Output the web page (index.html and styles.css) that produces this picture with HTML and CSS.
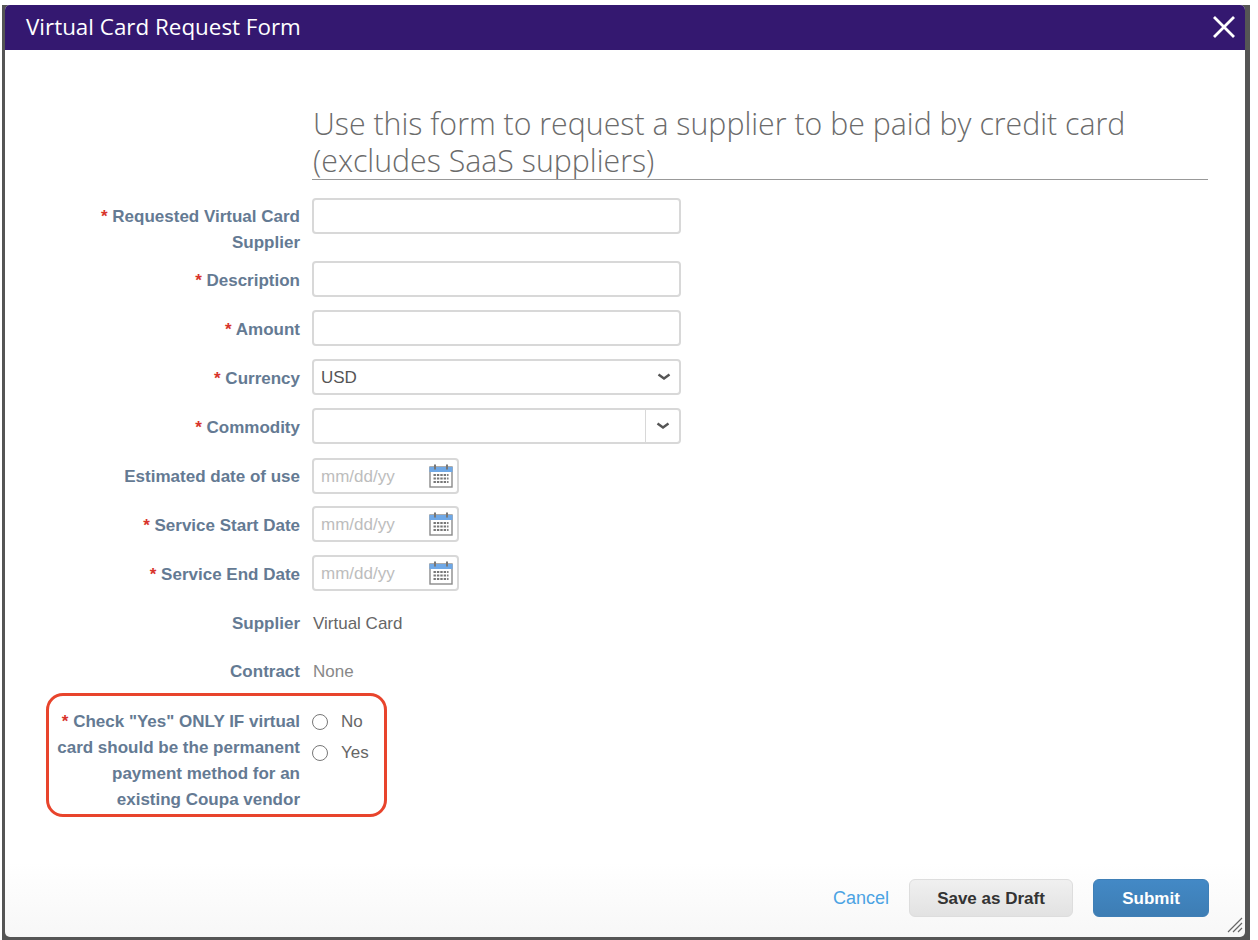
FILE: index.html
```html
<!DOCTYPE html>
<html lang="en">
<head>
  <meta charset="UTF-8" />
  <title>Virtual Card Request Form</title>
  <link rel="stylesheet" href="styles.css">
</head>
<body>
  <svg width="0" height="0" class="defs">
    <symbol id="cal" viewBox="0 0 24 24">
      <rect x="1" y="3" width="22" height="20" fill="#fff" stroke="#8a8a8a" stroke-width="1.4"/>
      <rect x="0.5" y="3" width="23" height="5" fill="#6fa8e6"/>
      <rect x="5" y="0.5" width="2" height="5" fill="#777"/>
      <rect x="17" y="0.5" width="2" height="5" fill="#777"/>
      <path d="M4.5 11h15M4.5 14.5h15M4.5 18h15" stroke="#777" stroke-width="2" stroke-dasharray="2.4 1"/>
    </symbol>
    <symbol id="chev" viewBox="0 0 14 8">
      <path d="M1.5 1.5 L7 5.5 L12.5 1.5" fill="none" stroke="#555" stroke-width="2.4"/>
    </symbol>
  </svg>

  <div class="backdrop">
    <div class="dialog">
      <div class="dialog-head">
        <span class="dialog-title">Virtual Card Request Form</span>
        <svg class="close" width="24" height="24" viewBox="0 0 24 24"><path d="M2 2 L22 22 M22 2 L2 22" stroke="#fff" stroke-width="2.8"/></svg>
      </div>

      <div class="dialog-body">
        <h2 class="intro">Use this form to request a supplier to be paid by credit card (excludes SaaS suppliers)</h2>

        <div class="row row-1">
          <label class="lbl"><span class="req">*</span> Requested Virtual Card Supplier</label>
          <div class="input wide"></div>
        </div>
        <div class="row row-2">
          <label class="lbl"><span class="req">*</span> Description</label>
          <div class="input wide"></div>
        </div>
        <div class="row row-3">
          <label class="lbl"><span class="req">*</span> Amount</label>
          <div class="input wide"></div>
        </div>
        <div class="row row-4">
          <label class="lbl"><span class="req">*</span> Currency</label>
          <div class="input wide select">USD<svg class="chev" width="14" height="8"><use href="#chev"/></svg></div>
        </div>
        <div class="row row-5">
          <label class="lbl"><span class="req">*</span> Commodity</label>
          <div class="input wide combo"><span class="combo-btn"><svg class="chev" width="14" height="8"><use href="#chev"/></svg></span></div>
        </div>
        <div class="row row-6">
          <label class="lbl">Estimated date of use</label>
          <div class="input date">mm/dd/yy<svg class="cal" width="24" height="24"><use href="#cal"/></svg></div>
        </div>
        <div class="row row-7">
          <label class="lbl"><span class="req">*</span> Service Start Date</label>
          <div class="input date">mm/dd/yy<svg class="cal" width="24" height="24"><use href="#cal"/></svg></div>
        </div>
        <div class="row row-8">
          <label class="lbl"><span class="req">*</span> Service End Date</label>
          <div class="input date">mm/dd/yy<svg class="cal" width="24" height="24"><use href="#cal"/></svg></div>
        </div>
        <div class="row row-9">
          <label class="lbl">Supplier</label>
          <div class="val">Virtual Card</div>
        </div>
        <div class="row row-10">
          <label class="lbl">Contract</label>
          <div class="val muted">None</div>
        </div>
        <div class="row row-11">
          <label class="lbl"><span class="req">*</span> Check "Yes" ONLY IF virtual card should be the permanent payment method for an existing Coupa vendor</label>
          <div class="radios">
            <div class="radio-line"><span class="radio"></span>No</div>
            <div class="radio-line"><span class="radio"></span>Yes</div>
          </div>
        </div>
      </div>

      <div class="dialog-foot">
        <a class="cancel">Cancel</a>
        <button class="btn draft">Save as Draft</button>
        <button class="btn submit">Submit</button>
      </div>

      <div class="callout"></div>
      <svg class="grip" width="18" height="18" viewBox="0 0 18 18"><path d="M3 17 L17 3 M8 17 L17 8 M13 17 L17 13" stroke="#666" stroke-width="1.2"/></svg>
    </div>
  </div>
</body>
</html>
```

FILE: styles.css
```css
html, body {
  margin: 0;
  height: 100%;
}
body {
  background: #fff;
  padding: 5px 8px 0 2px;
  box-sizing: border-box;
  font-family: "Liberation Sans", Arial, sans-serif;
  overflow: hidden;
}
.defs {
  position: absolute;
}
.backdrop {
  height: 935px;
  box-sizing: border-box;
  background: #555;
  padding: 0 5px 3px 3px;
}
.dialog {
  position: relative;
  height: 932px;
  background: linear-gradient(180deg, #fff 0, #fff 92%, #f7f7f7 100%);
  border-radius: 5px;
  display: flex;
  flex-direction: column;
}
.dialog-head {
  height: 45px;
  flex: none;
  box-sizing: border-box;
  background: #341870;
  border-radius: 5px 5px 0 0;
  display: flex;
  align-items: center;
  justify-content: space-between;
  padding: 0 9px 2px 21px;
}
.dialog-title {
  font-family: "Open Sans", sans-serif;
  font-size: 22.4px;
  color: #fff;
}
.dialog-body {
  flex: 1;
  padding: 55px 37px 0 0;
}
.intro {
  margin: 0 0 18px 307px;
  padding-left: 1px;
  border-bottom: 1px solid #999;
  font-family: "Open Sans", sans-serif;
  font-weight: 300;
  font-size: 30.3px;
  line-height: 37px;
  color: #6b6b6b;
}
.row {
  display: flex;
  align-items: flex-start;
  gap: 12px;
}
.row-1 { margin-bottom: 5px; }
.row-2, .row-3, .row-4 { margin-bottom: 13px; }
.row-5 { margin-bottom: 14px; }
.row-6 { margin-bottom: 12px; }
.row-7 { margin-bottom: 13px; }
.row-8 { margin-bottom: 20px; }
.row-9 { margin-bottom: 22px; }
.row-10 { margin-bottom: 24px; }
.lbl {
  width: 295px;
  flex: none;
  box-sizing: border-box;
  padding: 7px 0 0 40px;
  text-align: right;
  font-size: 17px;
  font-weight: bold;
  line-height: 26px;
  color: #647a93;
}
.row-1 .lbl, .row-6 .lbl {
  padding-top: 6px;
}
.row-9 .lbl, .row-10 .lbl, .row-11 .lbl {
  padding-top: 0;
}
.req {
  color: #d8342c;
}
.input {
  height: 36px;
  box-sizing: border-box;
  border: 2px solid #d8d8d8;
  border-radius: 4px;
  background: #fff;
  display: flex;
  align-items: center;
  font-size: 17px;
  padding: 2px 0 0 7px;
  color: #555;
}
.wide {
  width: 369px;
}
.select {
  justify-content: space-between;
  padding-right: 8px;
}
.select .chev {
  margin-top: -2px;
}
.combo {
  justify-content: flex-end;
  padding: 0;
}
.combo-btn {
  width: 34px;
  height: 100%;
  box-sizing: border-box;
  border-left: 1px solid #d8d8d8;
  display: flex;
  align-items: center;
  justify-content: center;
}
.date {
  width: 147px;
  justify-content: space-between;
  padding-right: 4px;
  color: #bdbdbd;
}
.date .cal {
  margin-top: -2px;
}
.val {
  padding-left: 1px;
  font-size: 17px;
  line-height: 26px;
  color: #666;
}
.muted {
  color: #888;
}
.radios {
  display: flex;
  flex-direction: column;
  gap: 5px;
}
.radio-line {
  display: flex;
  align-items: center;
  font-size: 17px;
  line-height: 26px;
  color: #666;
}
.radio {
  width: 16px;
  height: 16px;
  box-sizing: border-box;
  border: 1px solid #777;
  border-radius: 50%;
  margin-right: 13px;
  background: #fff;
}
.dialog-foot {
  flex: none;
  display: flex;
  align-items: center;
  justify-content: flex-end;
  padding: 0 36px 20px 0;
}
.cancel {
  font-size: 18px;
  color: #4ba3e3;
  margin-right: 20px;
}
.btn {
  height: 38px;
  padding-top: 3px;
  border-radius: 6px;
  font-family: "Liberation Sans", Arial, sans-serif;
  font-size: 17px;
  font-weight: bold;
}
.draft {
  width: 164px;
  margin-right: 20px;
  border: 1px solid #ddd;
  background: linear-gradient(180deg, #f0f0f0, #e2e2e2);
  color: #333;
}
.submit {
  width: 116px;
  border: 1px solid #3f7fb6;
  background: linear-gradient(180deg, #4389c6, #3d7db4);
  color: #fff;
}
.callout {
  position: absolute;
  left: 41px;
  top: 688px;
  width: 341px;
  height: 124px;
  box-sizing: border-box;
  border: 3px solid #e8442c;
  border-radius: 17px;
}
.grip {
  position: absolute;
  right: 2px;
  bottom: 4px;
}
```
